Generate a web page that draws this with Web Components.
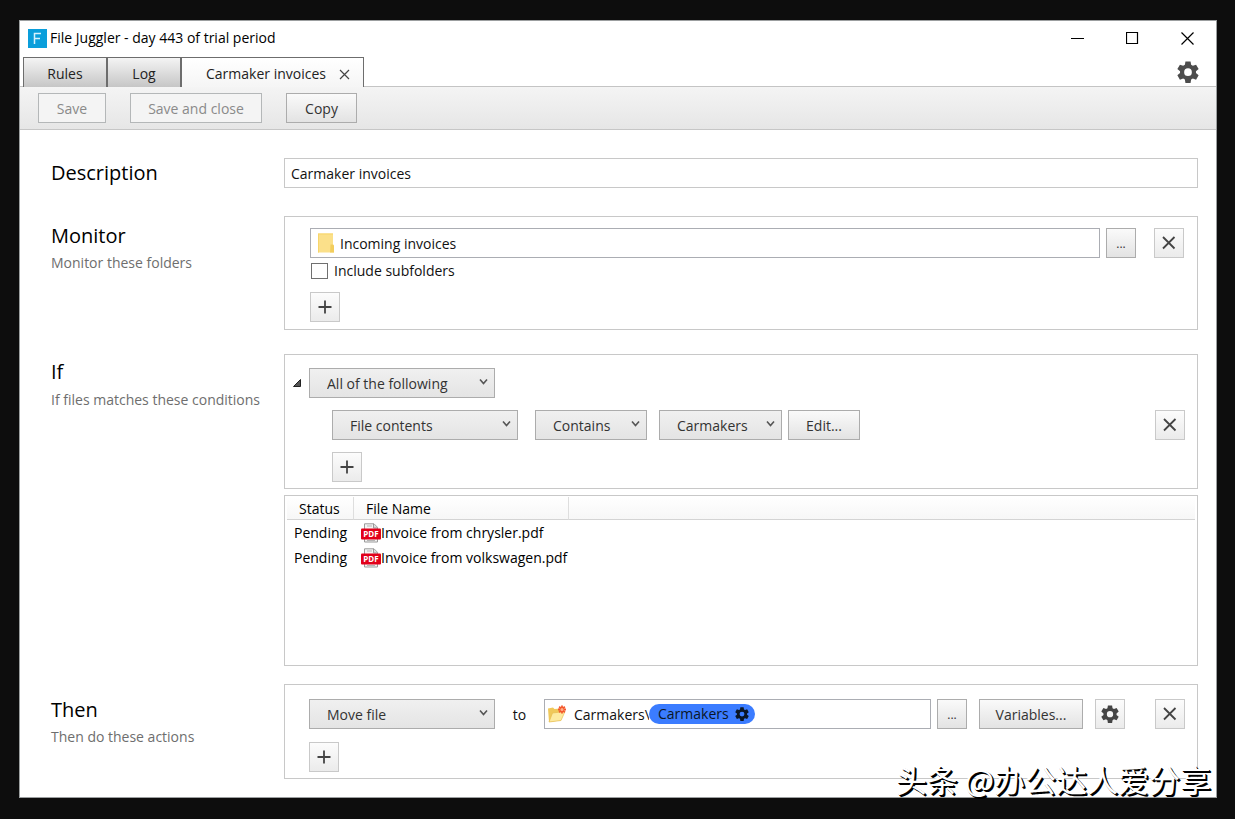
<!DOCTYPE html>
<html lang="en">
<head>
<meta charset="utf-8">
<title>File Juggler</title>
<style>
  body {
    margin: 0;
    background: #0d0d0d;
    color: #111;
    font: 14px/20px "Open Sans", "Noto Sans", sans-serif;
  }
  .desktop { position: relative; padding: 20px 18px 21px 19px; }
  .desc { --label-top: 1px; }
  .monitor { --label-top: 6px; margin-top: 28px; }
  .if { --label-top: 4px; --label-gap: 4px; margin-top: 24px; }
  .then { --label-top: 12px; margin-top: 18px; }
  .monitor fj-panel { --pad: 11px 13px 7px 25px; }
  .if fj-panel { --pad: 13px 12px 6px 24px; --gap: 12px; }
  .then fj-panel { --pad: 14px 12px 6px 24px; --gap: 13px; }
  .push { margin-left: auto; }
  .nest { margin-left: 23px; }
  .grow { flex: 1; }
</style>
</head>
<body>
<div class="desktop">
  <fj-window caption="File Juggler - day 443 of trial period">
    <fj-tabs></fj-tabs>
    <fj-toolbar>
      <fj-button w="68" disabled>Save</fj-button>
      <fj-button w="132" disabled>Save and close</fj-button>
      <fj-button w="71">Copy</fj-button>
    </fj-toolbar>
    <fj-form>
      <fj-section class="desc" heading="Description">
        <fj-input label="Description" value="Carmaker invoices"></fj-input>
      </fj-section>
      <fj-section class="monitor" heading="Monitor" hint="Monitor these folders">
        <fj-panel>
          <fj-row>
            <fj-input class="grow strong" icon="folder" label="Folder" value="Incoming invoices"></fj-input>
            <fj-button w="30" style="margin-left:6px" small label="Browse">...</fj-button>
            <fj-button w="30" style="margin-left:18px" soft label="Remove folder"><fj-icon name="x"></fj-icon></fj-button>
          </fj-row>
          <fj-check>Include subfolders</fj-check>
          <fj-row><fj-button w="30" soft label="Add folder"><fj-icon name="plus"></fj-icon></fj-button></fj-row>
        </fj-panel>
      </fj-section>
      <fj-section class="if" heading="If" hint="If files matches these conditions">
        <fj-panel>
          <fj-row>
            <fj-expander></fj-expander>
            <fj-select w="186" label="Match" value="All of the following"></fj-select>
          </fj-row>
          <fj-row class="nest">
            <fj-select w="186" label="Property" value="File contents"></fj-select>
            <fj-select w="112" style="margin-left:17px" label="Operator" value="Contains"></fj-select>
            <fj-select w="123" style="margin-left:12px" label="List" value="Carmakers"></fj-select>
            <fj-button w="72" style="margin-left:6px">Edit...</fj-button>
            <fj-button w="30" class="push" soft label="Remove condition"><fj-icon name="x"></fj-icon></fj-button>
          </fj-row>
          <fj-row class="nest"><fj-button w="30" soft label="Add condition"><fj-icon name="plus"></fj-icon></fj-button></fj-row>
        </fj-panel>
        <fj-file-list></fj-file-list>
      </fj-section>
      <fj-section class="then" heading="Then" hint="Then do these actions">
        <fj-panel>
          <fj-row>
            <fj-select w="186" label="Action" value="Move file"></fj-select>
            <fj-word>to</fj-word>
            <fj-path class="grow"></fj-path>
            <fj-button w="30" style="margin-left:6px" small label="Browse">...</fj-button>
            <fj-button w="104" style="margin-left:12px">Variables...</fj-button>
            <fj-button w="30" style="margin-left:12px" soft label="Options"><fj-icon name="gear" size="18"></fj-icon></fj-button>
            <fj-button w="30" style="margin-left:30px" soft label="Remove action"><fj-icon name="x"></fj-icon></fj-button>
          </fj-row>
          <fj-row><fj-button w="30" soft label="Add action"><fj-icon name="plus"></fj-icon></fj-button></fj-row>
        </fj-panel>
      </fj-section>
    </fj-form>
  </fj-window>
  <fj-watermark>头条 @办公达人爱分享</fj-watermark>
</div>

<script>
const GEAR = '<path fill-rule="evenodd" d="M9.200 .5h5.600l.6 3.700 1.900 1.100 3.500-1.300 2.800 4.800-2.900 2.400v2l2.900 2.400-2.800 4.800-3.500-1.300-1.900 1.100-.6 3.700H9.200l-.6-3.700-1.900-1.100-3.500 1.300L.4 15.600l2.900-2.400v-2L.4 8.800 3.200 4l3.500 1.300 1.900-1.100zM12 8a4.200 4.200 0 1 0 0 8.400A4.200 4.200 0 0 0 12 8z"/>';
const ICONS = {
  gear: { box: 24, w: 18, body: GEAR },
  x: { box: 14, w: 14, body: '<path d="M1 1l11.500 11.500M12.500 1L1 12.500" fill="none" stroke="currentColor" stroke-width="1.800"/>' },
  plus: { box: 14, w: 14, body: '<path d="M7 .5v13M.5 7h13" fill="none" stroke="currentColor" stroke-width="1.800"/>' },
  folder: { w: 18, h: 20, vb: '0 0 18 20', body: '<path d="M1 .5h15v11l1 1V19.500H1z" fill="#fbe08a"/><path d="M1 .5h15v1H2v18H1z" fill="#f7d56b"/><path d="M13.500 11.500h2.500l1 1v7h-4z" fill="#f2cd5c"/>' },
  newfolder: { vb: '0 0 20 18', w: 20, h: 18, body: '<path d="M1 3.500l5-1 1.500 1.500 6-.5v12L2 17z" fill="#efc85a"/><path d="M2 17L5.500 8l12.500-1.500-4 9z" fill="#fdeaa0" stroke="#e6bd50" stroke-width=".7"/><g stroke="#f4582c" stroke-width="1.800"><path d="M15 .5v8M11 4.500h8M12.200 1.700l5.600 5.600M17.800 1.700l-5.600 5.600"/></g><circle cx="15" cy="4.500" r="1.500" fill="#ffb08a"/>' },
  pdf: { vb: '0 0 20 20', w: 20, h: 20, body: '<path d="M3.500.8h9.500l3.500 3.500v14.700h-13z" fill="#f4f4f4" stroke="#9a9a9a"/><path d="M6 3h5M6 17.500h8" stroke="#b5b5b5"/><path d="M12.500 1v4h4" fill="#ddd" stroke="#9a9a9a"/><rect y="5.500" width="20" height="11" rx="1" fill="#e2001a"/><text x="10" y="14" text-anchor="middle" font-family="Open Sans, sans-serif" font-size="8" font-weight="700" fill="#fff">PDF</text>' }
};
const svg = (name, size) => {
  const i = ICONS[name], w = size || i.w, h = size || i.h || i.w;
  return `<svg width="${w}" height="${h}" viewBox="${i.vb || `0 0 ${i.box} ${i.box}`}" fill="currentColor" aria-hidden="true">${i.body}</svg>`;
};
const BASE = `*,:host{box-sizing:border-box} :host{display:block} svg{display:block;flex:none}
  button,input,select{font:inherit;color:inherit;margin:0;border-radius:0}`;
const define = (name, render) => customElements.define(name, class extends HTMLElement {
  constructor() { super(); this.attachShadow({ mode: 'open' }); }
  connectedCallback() {
    const a = (k, d = '') => this.getAttribute(k) ?? d;
    this.shadowRoot.innerHTML = `<style>${BASE}</style>` + render(a, this);
  }
});

define('fj-icon', a => `<style>:host{flex:none}</style>${svg(a('name'), a('size'))}`);

define('fj-window', a => `<style>
  :host{background:#fff;border:1px solid #9c9fa0}
  header{display:flex;align-items:center;height:36px;padding:0 0 2px 8px;color:#000}
  .logo{width:19px;height:19px;margin-right:3px}
  .caption{flex:1}
  .ctl{display:flex;gap:9px;padding-right:6px}
  .ctl button{width:46px;height:32px;border:0;background:none;padding:0;display:flex;align-items:center;justify-content:center}
</style>
<header>
  <svg class="logo" viewBox="0 0 19 19"><rect width="19" height="19" fill="#0a9edb"/><path d="M6.500 15V4.500H13M6.500 9.500h5.500" fill="none" stroke="#d8f2fd" stroke-width="1.500"/></svg>
  <span class="caption">${a('caption')}</span>
  <div class="ctl">
    <button aria-label="Minimize"><svg width="13" height="13"><path d="M0 6.500h13" stroke="#000"/></svg></button>
    <button aria-label="Maximize"><svg width="13" height="13"><path d="M.5.5h11v11H.5z" fill="none" stroke="#000" stroke-width="1.200"/></svg></button>
    <button aria-label="Close"><svg width="13" height="13"><path d="M.5.5l12 12M12.500.5l-12 12" stroke="#000" stroke-width="1.200"/></svg></button>
  </div>
</header><slot></slot>`);

define('fj-tabs', () => `<style>
  :host{display:flex;height:30px;padding:0 17px 0 3px;border-bottom:1px solid #c4c4c4}
  nav{display:flex;height:30px}
  .tab{border:solid #6d6d6d;border-width:1px 1px 0;height:30px;padding:3px 0 0;text-align:center;color:#222;background:linear-gradient(#f4f4f4,#c6c6c6)}
  .rules{width:84px}.log{width:74px}
  .active{display:flex;align-items:center;justify-content:space-between;width:183px;padding:3px 13px 0 24px;background:linear-gradient(#fff,#f5f5f5)}
  .close{border:0;background:none;padding:0;width:11px}
  .gear{margin-left:auto;border:0;background:none;padding:0;color:#4c4c4c;align-self:center}
</style>
<nav><button class="tab rules">Rules</button><button class="tab log">Log</button>
<div class="tab active"><span>Carmaker invoices</span><button class="close" aria-label="Close tab"><svg width="11" height="11" viewBox="0 0 11 11"><path d="M1 1l9 9M10 1l-9 9" stroke="#444" stroke-width="1.200"/></svg></button></div></nav>
<button class="gear" aria-label="Settings">${svg('gear', 22)}</button>`);

define('fj-toolbar', () => `<style>
  :host{display:flex;gap:24px;padding:6px 18px;background:linear-gradient(#f4f4f4,#e6e6e6);border-bottom:1px solid #c6c6c6}
</style><slot></slot>`);

define('fj-form', () => `<style>:host{padding:28px 18px 18px 31px}</style><slot></slot>`);

define('fj-section', a => `<style>
  :host{display:grid;grid-template-columns:233px minmax(0,1fr)}
  .label{padding-top:var(--label-top)}
  h2{margin:0;font-weight:400;font-size:20px;line-height:28px;color:#000}
  p{margin:var(--label-gap,3px) 0 0;color:#6e6e6e}
</style><div class="label"><h2>${a('heading')}</h2>${a('hint') ? `<p>${a('hint')}</p>` : ''}</div><div><slot></slot></div>`);

define('fj-panel', () => `<style>
  :host{display:flex;flex-direction:column;gap:var(--gap,0);border:1px solid #c8c8c8;padding:var(--pad)}
</style><slot></slot>`);

define('fj-row', () => `<style>:host{display:flex;align-items:center}</style><slot></slot>`);

define('fj-word', () => `<style>:host{width:49px;text-align:center;padding-top:2px}</style><slot></slot>`);

define('fj-button', (a, el) => `<style>
  :host{flex:none;width:${a('w')}px}
  button{display:flex;align-items:center;justify-content:center;width:100%;height:30px;padding:2px 0 0;border:1px solid #acacac;color:#333;background:linear-gradient(#fafafa,#e3e3e3)}
  :host([soft]) button{padding:0;border-color:#c9c9c9;background:linear-gradient(#fcfcfc,#ebebeb);color:#444}
  :host([small]) button{font-size:12px}
  button:disabled{color:#8a8a8a;border-color:#b4b7b8;background:#f4f4f4}
</style><button ${el.hasAttribute('disabled') ? 'disabled' : ''} ${a('label') ? `aria-label="${a('label')}"` : ''}><slot></slot></button>`);

define('fj-input', a => `<style>
  .box{display:flex;align-items:center;height:30px;padding-left:6px;border:1px solid #c8c8c8;background:#fff}
  :host(.strong) .box{border-color:#abadb3}
  input{flex:1;min-width:0;height:28px;border:0;padding:0;background:none;outline:0}
  svg{margin-right:5px}
</style><div class="box">${a('icon') ? svg(a('icon')) : ''}<input type="text" aria-label="${a('label')}" value="${a('value')}"></div>`);

define('fj-check', () => `<style>
  :host{margin:3px 0 11px}
  label{display:flex;align-items:center;gap:6px;height:20px;padding-left:1px}
  input{appearance:none;width:17px;height:16px;border:1px solid #707070;background:#fff}
</style><label><input type="checkbox"><slot></slot></label>`);

define('fj-expander', () => `<style>
  :host{width:24px;margin-left:-24px}
  button{display:block;border:0;background:none;padding:0 0 0 8px}
</style><button aria-label="Collapse"><svg width="8" height="8"><path d="M7.500.5v7h-7z" fill="#555" stroke="#222"/></svg></button>`);

define('fj-select', a => `<style>
  :host{flex:none;position:relative;width:${a('w')}px}
  select{appearance:none;display:block;width:100%;height:30px;padding:2px 20px 0 17px;border:1px solid #acacac;color:#333;background:linear-gradient(#f0f0f0,#e4e4e4)}
  svg{position:absolute;right:7px;top:10px;pointer-events:none}
</style><select aria-label="${a('label')}"><option>${a('value')}</option></select>
<svg width="9" height="8" viewBox="0 0 9 8"><path d="M1 1.500l3.500 4 3.500-4" fill="none" stroke="#555" stroke-width="1.600"/></svg>`);

define('fj-path', () => `<style>
  .box{display:flex;align-items:center;height:30px;padding-left:2px;border:1px solid #abadb3;background:#fff}
  input{width:75px;height:28px;border:0;padding:0;margin-left:7px;background:none;outline:0}
  .pill{display:flex;align-items:center;gap:6px;height:20px;padding:0 6px 0 9px;border:0;border-radius:10px;background:#3b7cff;color:#0a1626}
</style><div class="box">${svg('newfolder')}<input type="text" aria-label="Destination folder" value="Carmakers\\"><button class="pill">Carmakers ${svg('gear', 14)}</button></div>`);

define('fj-file-list', () => {
  const row = f => `<tr><td>Pending</td><td><span class="file">${svg('pdf')}${f}</span></td><td></td></tr>`;
  return `<style>
  :host{margin-top:6px;border:1px solid #c8c8c8;height:171px;padding:1px 2px 2px}
  table{border-collapse:separate;border-spacing:0;table-layout:fixed;width:100%;color:#000}
  th{height:23px;padding:2px 0 0 12px;text-align:left;font-weight:400;border-bottom:1px solid #d4d4d4;border-right:1px solid #dedede;background:linear-gradient(#fff,#f7f7f7)}
  th:last-child{border-right:0}
  td{height:25px;padding:0 0 0 7px;white-space:nowrap}
  .a{width:67px}.b{width:215px}
  .file{display:flex;align-items:center}
</style><table><colgroup><col class="a"><col class="b"><col></colgroup>
<thead><tr><th>Status</th><th>File Name</th><th></th></tr></thead>
<tbody>${row('Invoice from chrysler.pdf')}${row('Invoice from volkswagen.pdf')}</tbody></table>`;
});

define('fj-watermark', () => `<style>
  :host{position:absolute;right:24px;bottom:17px;font:31px/46px "Noto Sans CJK SC",sans-serif;color:#fff;text-shadow:1px 1px 0 #000,2px 2px 0 #000;white-space:nowrap;pointer-events:none}
</style><slot></slot>`);
</script>
</body>
</html>
